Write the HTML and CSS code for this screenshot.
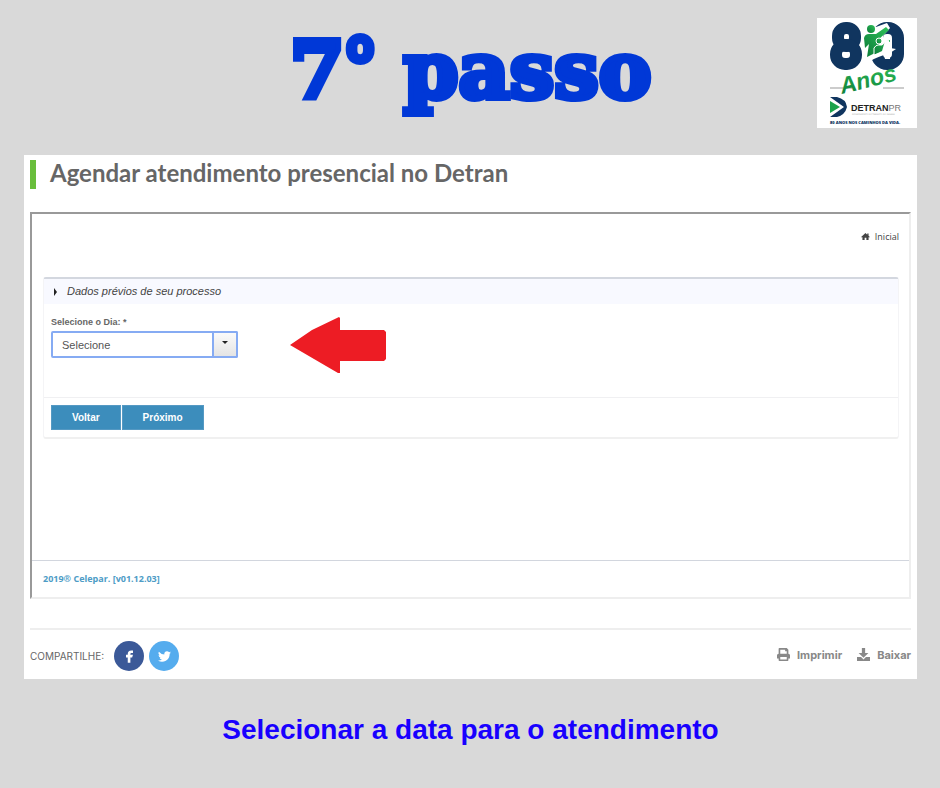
FILE: index.html
```
<!DOCTYPE html>
<html lang="pt-BR">
<head>
  <meta charset="utf-8">
  <title>Agendar atendimento presencial - 7º passo</title>
  <link rel="stylesheet" href="styles.css">
</head>
<body>
  <header class="header">
    <h1>7<span class="ordinal">º</span> passo</h1>
    <svg class="logo" viewBox="0 0 100 110" role="img" aria-label="80 Anos Detran PR">
      <defs>
        <linearGradient id="green" x1="0" y1="1" x2="1" y2="0">
          <stop offset="0" stop-color="#0b7a38"/>
          <stop offset="1" stop-color="#2fc25a"/>
        </linearGradient>
      </defs>
      <rect width="100" height="110" fill="#fff"/>
      <!-- 80 -->
      <g fill="none" stroke="#10355f" stroke-width="12">
        <rect x="21" y="10" width="17" height="18" rx="8"/>
        <rect x="19" y="27" width="20" height="19" rx="9"/>
        <rect x="60" y="10" width="21" height="36" rx="10"/>
      </g>
      <!-- driver and passenger -->
      <path d="M47 10Q48 5 53 5L59 9L70 5L73 10L66 18V34L58 38L46 41Z" fill="#fff"/>
      <g fill="url(#green)">
        <circle cx="54" cy="11" r="4"/>
        <path d="M47 20Q48 16 52 16H59L69 9L72 12L62 21V33L50 39L52 26L48 30Z"/>
        <path d="M57 30Q59 27 61 27H65L72 21L74 23L67 30V34L57 37Z" stroke="#fff" stroke-width="1"/>
        <circle cx="62" cy="23" r="3" stroke="#fff" stroke-width="1"/>
      </g>
      <path d="M46 42Q57 37 65 33L68 23L72 22L73 30L79 31L73 35V41L68 41L67 37Q57 40 49 46Z" fill="#fff"/>
      <path d="M13 70H35M66 70H87" stroke="#999" stroke-width="1"/>
      <text class="logo-anos" x="25" y="76" transform="rotate(-14 25 76)">Anos</text>
      <!-- road arrow -->
      <path d="M13 79H20Q29 81 30 89Q28 97 20 99H13L27 89Z" fill="#10355f"/>
      <path d="M13 83L23 89L13 95Z" fill="#1ba34c"/>
      <text class="logo-name" x="34" y="93">DETRAN<tspan class="logo-uf">PR</tspan></text>
      <text class="logo-dept" x="35" y="97">DEPARTAMENTO DE TRÂNSITO DO PARANÁ</text>
      <text class="logo-motto" x="13" y="106">80 ANOS NOS CAMINHOS DA VIDA.</text>
    </svg>
  </header>

  <main class="page">
    <h2>Agendar atendimento presencial no Detran</h2>

    <section class="frame">
      <nav class="crumbs">
        <a href="#">
          <svg width="9" height="7" viewBox="0 0 20 16"><path fill="currentColor" d="M10 0L14 4V1H17V6L20 9L18 10L17 9V16H12V11H8V16H3V9L2 10L0 9Z"/></svg>
          Inicial
        </a>
      </nav>

      <form class="process">
        <h3>Dados prévios de seu processo</h3>
        <div class="process-body">
          <div class="field">
            <label for="dia">Selecione o Dia: *</label>
            <div class="select">
              <select id="dia">
                <option>Selecione</option>
              </select>
            </div>
          </div>
          <svg class="arrow" width="96" height="57" viewBox="0 0 96 57"><path d="M0 28L22 13L49 0L50 1V13H94L96 15V42L94 44H50V56L48 56Z" fill="#ed1c24"/></svg>
        </div>
        <div class="actions">
          <button type="button">Voltar</button>
          <button type="button">Próximo</button>
        </div>
      </form>

      <div class="frame-footer">2019® Celepar. [v01.12.03]</div>
    </section>

    <footer class="share">
      <span class="share-label">COMPARTILHE:</span>
      <a class="social facebook" href="#" aria-label="Facebook">
        <svg width="7" height="13" viewBox="0 0 8 14"><path fill="#fff" d="M2 14V8H0V5H2V4Q2 0 6 0H8V3H6Q5 3 5 4V5H8L7 8H5V14Z"/></svg>
      </a>
      <a class="social twitter" href="#" aria-label="Twitter">
        <svg width="13" height="13" viewBox="0 0 24 24"><path fill="#fff" d="M24 4.6a10 10 0 0 1-2.8.8 5 5 0 0 0 2.1-2.7 10 10 0 0 1-3.1 1.2 4.9 4.9 0 0 0-8.4 4.5A14 14 0 0 1 1.7 3.2a4.9 4.9 0 0 0 1.5 6.5 5 5 0 0 1-2.2-.6 4.9 4.9 0 0 0 3.9 4.9 5 5 0 0 1-2.2.1 4.9 4.9 0 0 0 4.6 3.4A9.9 9.9 0 0 1 0 19.5a14 14 0 0 0 21.5-12.4A10 10 0 0 0 24 4.6z"/></svg>
      </a>
      <div class="tools">
        <a href="#">
          <svg width="13" height="13" viewBox="0 0 16 16"><path fill="currentColor" fill-rule="evenodd" d="M2 7V1Q2 0 3 0H12L14 2V7Q16 7 16 9V13H14V15Q14 16 13 16H3Q2 16 2 15V13H0V9Q0 7 2 7ZM4 2V7H12V4H10V2ZM4 11V14H12V11Z"/></svg>
          Imprimir
        </a>
        <a href="#">
          <svg width="13" height="13" viewBox="0 0 16 16"><path fill="currentColor" d="M6 0H10V6H14L8 12L2 6H6ZM0 11H5L8 14L11 11H16V16H0Z"/></svg>
          Baixar
        </a>
      </div>
    </footer>
  </main>

  <p class="caption">Selecionar a data para o atendimento</p>
</body>
</html>
```
FILE: styles.css
```
*, *::before, *::after {
  box-sizing: border-box;
}
body {
  margin: 0;
  padding: 18px 23px 24px 24px;
  background-color: #d9d9d9;
  font-family: "Liberation Sans", Arial, sans-serif;
}
.header {
  display: grid;
  grid-template-columns: 1fr auto 1fr;
  height: 137px;
}
h1 {
  grid-column: 2;
  margin: 0;
  color: #0038d7;
  font: bold 79px/106px "DejaVu Serif", serif;
  -webkit-text-stroke: 6px #0038d7;
}
.ordinal {
  font-family: Roboto, sans-serif;
  font-size: 68px;
  line-height: 0;
  vertical-align: 14px;
}
.logo {
  justify-self: end;
  width: 100px;
  height: 110px;
}
.logo-anos {
  fill: url(#green);
  font: italic bold 23px "Liberation Sans", sans-serif;
}
.logo-name {
  fill: #222;
  font: bold 9px "Liberation Sans", sans-serif;
}
.logo-uf {
  fill: #777;
  font-weight: normal;
}
.logo-dept {
  fill: #aaa;
  font: 2px "DejaVu Sans", sans-serif;
}
.logo-motto {
  fill: #10355f;
  font: 800 4px "Open Sans", sans-serif;
}
.page {
  padding: 5px 6px 8px;
  background-color: #fff;
}
h2 {
  margin: 0 0 23px;
  padding: 0 0 4px 14px;
  border-left: 6px solid #69be3c;
  color: #666;
  font: bold 24px/25px Lato, sans-serif;
}
.frame {
  border: 2px solid;
  border-color: #999 #eee #eee #999;
}
.crumbs {
  padding: 16px 10px 0;
  text-align: right;
  font: 9px/14px "Open Sans", sans-serif;
}
.crumbs a {
  color: #444;
  text-decoration: none;
}
.crumbs svg {
  margin-right: 3px;
}
.process {
  margin: 33px 10px 0 11px;
  border: 1px solid #f4f4f6;
  border-top: 2px solid #d3d7df;
  border-bottom: 2px solid #f0f0f0;
  border-radius: 3px;
}
h3 {
  display: flex;
  align-items: center;
  gap: 10px;
  margin: 0;
  padding-left: 10px;
  background-color: #f8f9ff;
  color: #444;
  font: italic 11px/25px "Liberation Sans", Arial, sans-serif;
}
h3::before {
  content: "";
  border: 4px solid transparent;
  border-left: 3px solid #222;
  border-right-width: 0;
}
.process-body {
  display: flex;
  gap: 52px;
  padding: 13px 7px 23px;
}
.field label {
  display: block;
  margin-bottom: 4px;
  color: #666;
  font: bold 9px/10px "Liberation Sans", Arial, sans-serif;
}
.select {
  position: relative;
  width: 187px;
}
.select select {
  appearance: none;
  display: block;
  width: 100%;
  height: 27px;
  padding: 0 36px 0 9px;
  border: 2px solid #86abf3;
  border-radius: 2px;
  background-color: #fff;
  color: #555;
  font: 11px "Liberation Sans", Arial, sans-serif;
}
.select::before {
  content: "";
  position: absolute;
  top: 0;
  right: 0;
  width: 26px;
  height: 27px;
  border: 2px solid #86abf3;
  border-radius: 2px;
  background: linear-gradient(#fafafa, #e4e4e4);
  pointer-events: none;
}
.select::after {
  content: "";
  position: absolute;
  top: 10px;
  right: 10px;
  border: 3px solid transparent;
  border-top-color: #222;
  border-bottom-width: 0;
  pointer-events: none;
}
.actions {
  display: flex;
  gap: 1px;
  padding: 7px;
  border-top: 1px solid #f0f0f2;
}
.actions button {
  height: 25px;
  padding: 0 20px;
  border: 1px solid #5599c3;
  background-color: #3c8dbc;
  color: #fff;
  font: bold 10px "Liberation Sans", Arial, sans-serif;
}
.frame-footer {
  margin-top: 121px;
  padding: 9px 11px;
  border-top: 1px solid #d2d6de;
  color: #4e9cc6;
  font: bold 9px/18px "Open Sans", sans-serif;
}
.share {
  display: flex;
  align-items: center;
  margin-top: 29px;
  padding-top: 11px;
  border-top: 2px solid #eee;
}
.share-label {
  margin-right: 10px;
  color: #666;
  font: 10px Inter, sans-serif;
}
.social {
  display: flex;
  align-items: center;
  justify-content: center;
  width: 30px;
  height: 30px;
  margin-right: 5px;
  border-radius: 50%;
}
.facebook {
  background-color: #3b5998;
}
.twitter {
  background-color: #55acee;
}
.tools {
  display: flex;
  gap: 15px;
  margin-left: auto;
  padding-bottom: 3px;
}
.tools a {
  display: flex;
  align-items: center;
  gap: 7px;
  color: #888;
  font: bold 11px Inter, sans-serif;
  text-decoration: none;
}
.caption {
  margin: 34px 0 0;
  color: #1800ff;
  font-size: 28px;
  font-weight: bold;
  line-height: 34px;
  text-align: center;
}
```
